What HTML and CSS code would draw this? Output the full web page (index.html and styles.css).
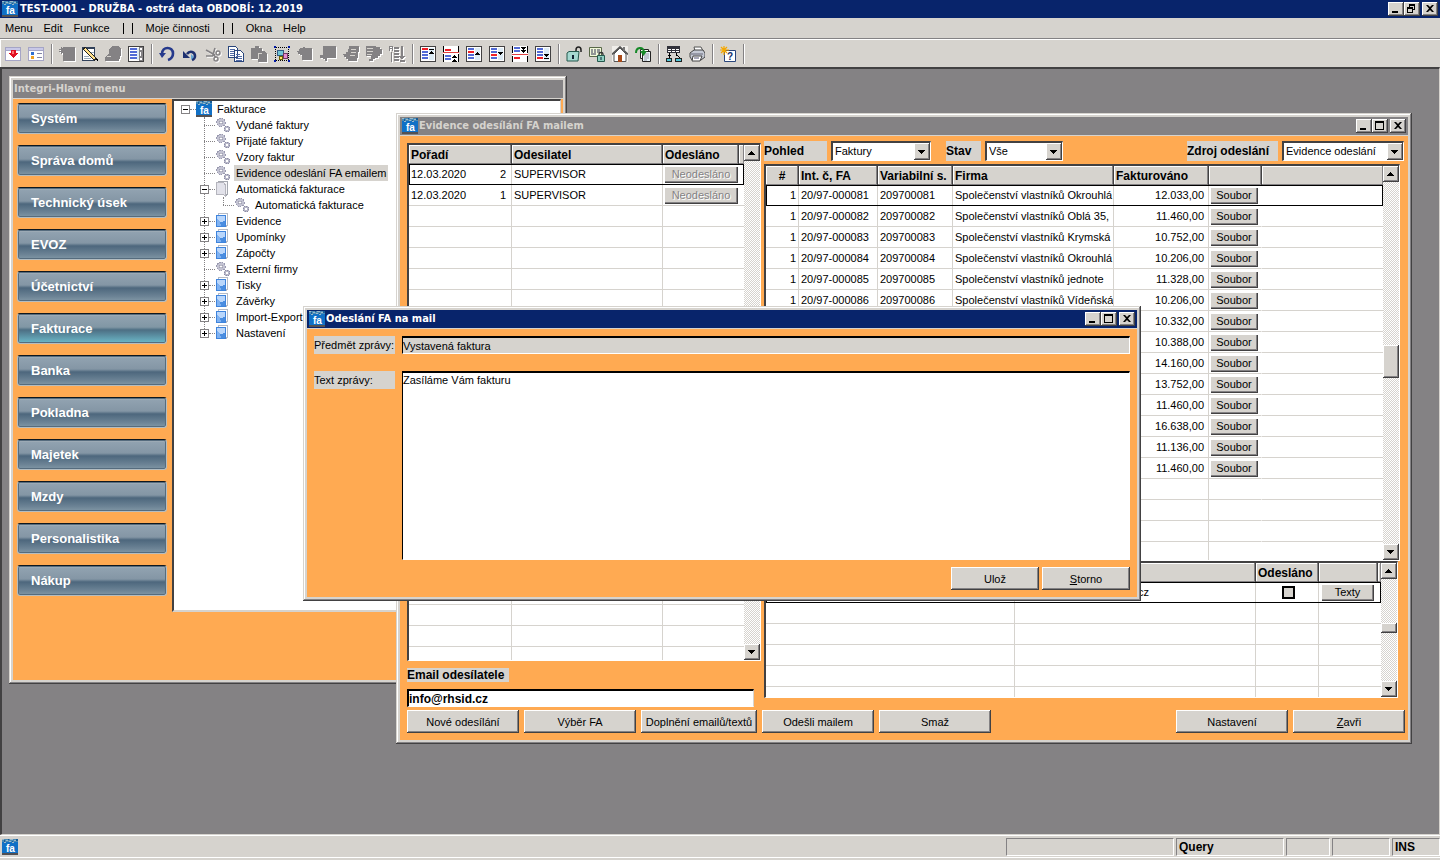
FILE: index.html
```html
<!DOCTYPE html>
<html lang="cs">
<head>
<meta charset="utf-8">
<title>TEST-0001 - DRUŽBA</title>
<link rel="stylesheet" href="styles.css">
</head>
<body>
<svg class="defs" aria-hidden="true">
  <symbol id="logo" viewBox="0 0 16 16">
    <rect width="16" height="16" fill="#1070c6"/><rect width="16" height="3" fill="#4a8ab5"/>
    <path d="M0 0h2v1H0zM4 1h2v1H4zM8 0h3v1H8zM7 2h2v1H7zM12 1h2v1h-2zM2 3h2v1H2zM10 3h2v1h-2z" fill="#9cb8c8"/>
    <path d="M2 1h1v2H2zM6 0h1v1H6zM10 2h1v1h-1zM14 0h2v2h-2z" fill="#165b96"/>
    <rect y="14" width="16" height="2" fill="#525052"/>
    <text x="4" y="13" class="logo-text">fa</text>
  </symbol>
  <symbol id="gear" viewBox="0 0 16 16">
    <circle cx="6" cy="5.500" r="4.200" fill="#c3c3d2" stroke="#9a9ab0" stroke-dasharray="1.500 1"/><circle cx="6" cy="5.500" r="1.600" fill="#fff" stroke="#8a8aa0" stroke-width=".6"/>
    <circle cx="12" cy="12" r="3" fill="#b7b7c8" stroke="#8c8ca4" stroke-dasharray="1.300 1"/><circle cx="12" cy="12" r="1.100" fill="#fff"/>
  </symbol>
  <symbol id="book" viewBox="0 0 16 16">
    <path d="M3.500.500h9v12l-2 1h-7z" fill="#fff" stroke="#b5bac5"/><path d="M1 2h10v12H1z" fill="#3f84dc"/><path d="M2 3h8v10H2z" fill="#7fb2f2"/><path d="M2 3h8v5L6 9 2 6z" fill="#b9d6fb"/><path d="M5 9l5-1v5H6z" fill="#4a8de0"/>
  </symbol>
  <symbol id="folder" viewBox="0 0 16 16">
    <path d="M3.500.500h9v12l-1 2-2-2h-6z" fill="#f5f5f8" stroke="#a5a8b0"/><path d="M1.500 1.500h7l2 2.500v11l-3-2h-6z" fill="#e2e2ea" stroke="#b5b5bd"/>
  </symbol>
  <symbol id="min" viewBox="0 0 12 10"><path d="M2 7h6v2H2z"/></symbol>
  <symbol id="max" viewBox="0 0 12 10"><path d="M1 0h9v9H1zM2 2v6h7V2z" fill-rule="evenodd"/></symbol>
  <symbol id="restore" viewBox="0 0 12 10"><path d="M3 0h6v6H7v3H1V3h2zM4 2v1h3v2h1V2zM2 5v3h4V5z" fill-rule="evenodd"/></symbol>
  <symbol id="close" viewBox="0 0 12 10"><path d="M2 1h2l2 2 2-2h2L7 4.500 10 8H8L6 6 4 8H2l3-3.500z" shape-rendering="auto"/></symbol>
  <symbol id="up" viewBox="0 0 8 8"><path d="M3 2h1v1h1v1h1v1h1v1H0V5h1V4h1V3h1z"/></symbol>
  <symbol id="down" viewBox="0 0 8 8"><path d="M0 2h7v1H6v1H5v1H4v1H3V5H2V4H1V3H0z"/></symbol>
  <symbol id="page" viewBox="0 0 16 16"><path d="M0 0h16v16H0z" fill="#424142"/><path d="M1 1h14v14H1z" fill="#fff"/><path d="M9 2h5v12H9z" fill="#dcebf5"/></symbol>
  <symbol id="win" viewBox="0 0 16 16"><path d="M0 1h16v14H0z" fill="#a5a5c6"/><path d="M1 2h14v2H1z" fill="#c8c8e8"/><path d="M1 5h14v9H1z" fill="#fff"/></symbol>
</svg>

<div class="app">
  <header class="titlebar">
    <svg class="i16"><use href="#logo"/></svg><h1>TEST-0001 - DRUŽBA - ostrá data OBDOBÍ: 12.2019</h1>
    <div class="ctl"><button type="button" aria-label="Minimalizovat"><svg><use href="#min"/></svg></button><button type="button" aria-label="Obnovit"><svg><use href="#restore"/></svg></button><button type="button" aria-label="Zavřít aplikaci"><svg><use href="#close"/></svg></button></div>
  </header>
  <nav class="menubar">
    <button type="button">Menu</button><button type="button">Edit</button><button type="button">Funkce</button><span class="bars"><i></i><i></i></span><button type="button">Moje činnosti</button><span class="bars"><i></i><i></i></span><button type="button">Okna</button><button type="button">Help</button>
  </nav>
  <div class="toolbar" role="toolbar" aria-label="Nástroje">
    <button type="button" aria-label="Konec"><svg><use href="#win"/><path d="M6 4h5v3h2v1h-1v1h-1v1h-1v1H9v1H8v-1H7v-1H6V9H5V8H4V7h2z" fill="#e01020"/><path d="M7 5h2v3H7z" fill="#ff7070"/></svg></button>
    <button type="button" aria-label="Formulář"><svg><use href="#win"/><path d="M3 6h3v3H3z" fill="#3070d0"/><path d="M3 10h3v3H3z" fill="#f0a020"/><path d="M9 7h5v1H9zM9 11h5v1H9z" fill="#8486a5"/></svg></button>
    <span class="sep"></span>
    <button type="button" aria-label="Nový"><svg class="dim"><path d="M4 1h12v14H4V7H3v1H2V6H0V5h2V4H0V3h2V1h1v1h1z"/></svg></button>
    <button type="button" aria-label="Upravit"><svg><path d="M0 1h13v14H0z" fill="#31415a"/><path d="M1 3h11v11H1z" fill="#fff"/><path d="M8 6h4M2 10h5M2 12h7" stroke="#9ab"/><path d="M2 2l12 12" stroke="#222" stroke-width="4"/><path d="M3 3l10 10" stroke="#ffe08a" stroke-width="2"/><path d="M13 13h3v3z"/></svg></button>
    <button type="button" aria-label="Smazat"><svg class="dim"><path d="M7 0h7l2 3v6l-2 6H0v-4l4-3V4z"/><path d="M2 10h4v1H2z" fill="#d6d3ce"/></svg></button>
    <button type="button" aria-label="Seznam"><svg><use href="#page"/><path d="M2 2h7v2H2zM2 5h7v2H2zM2 8h7v2H2zM2 11h7v2H2z" fill="#526bd6"/><path d="M11 1h4v14h-4z" fill="#848284"/><path d="M12 2h2v2h-2zM12 12h2v2h-2zM12 6h1v4h-1z" fill="#fff"/></svg></button>
    <span class="sep"></span>
    <button type="button" aria-label="Zpět"><svg class="soft"><path d="M3 8C3 0 14 0 14 7.500c0 3.500-2 5.500-5 6.500" fill="none" stroke="#263a8c" stroke-width="2.600"/><path d="M0 7h7l-4 5z" fill="#263a8c"/></svg></button>
    <button type="button" aria-label="Zpět o krok"><svg class="soft"><path d="M5 8c3-4 8-2 8 2 0 2-1 3-3 4" fill="none" stroke="#1d3070" stroke-width="2.600"/><path d="M1 5v7h7z" fill="#1d3070"/><path d="M9 8l3 3-3 3z" fill="#63a5d6"/></svg></button>
    <button type="button" aria-label="Vyjmout"><svg class="soft dim"><path d="M1 4l9 5M10 2L8 9l3 2M1 10h7" fill="none" stroke="#848284" stroke-width="1.600"/><circle cx="13" cy="7" r="2" fill="none" stroke="#848284" stroke-width="1.500"/><circle cx="11" cy="13" r="2" fill="none" stroke="#848284" stroke-width="1.500"/></svg></button>
    <button type="button" aria-label="Kopírovat"><svg><path d="M.500.500h7l2 2v9h-9zM6.500 4.500h6l3 3v8h-9z" fill="#fff" stroke="#29457b"/><path d="M2 3h5M2 5h4M2 7h4M2 9h4M8 8h4M8 10h6M8 12h6M8 14h6" transform="translate(0 .5)" stroke="#526ba5"/></svg></button>
    <button type="button" aria-label="Vložit"><svg class="dim"><path d="M0 2h4V0h4v2h3v3h2l3 3v8H7v-3H0z"/><path d="M7 7h4v1H8v5H7z" fill="#d6d3ce"/></svg></button>
    <button type="button" aria-label="Vybrat"><svg><path d="M1.500 1.500h13v13h-13z" fill="none" stroke="#000" stroke-dasharray="1 1"/><path d="M3.500 4.500h6v5h-6z" fill="#73c6d6" stroke="#315a84"/><path d="M9.500 7.500h4v5h-4z" fill="#e78cce" stroke="#733a63"/><path d="M5.500 10.500h3v3h-3z" fill="#ffe76b" stroke="#6b6300"/><path d="M0 0h2v2H0zM14 0h2v2h-2zM0 14h2v2H0zM14 14h2v2h-2z" fill="#0018a5"/></svg></button>
    <button type="button" aria-label="Vložit řádek"><svg class="dim"><path d="M3 2h3V1h2v1h7v12H5V9H3V8H1V6H0V5h2V3h1z"/></svg></button>
    <button type="button" aria-label="Odebrat řádek"><svg class="dim"><path d="M3 0h13v12H7v3H5v-2H3v-1H0V9h3z"/></svg></button>
    <button type="button" aria-label="Předchozí"><svg class="dim"><path d="M6 0h10v6h-1v6h-1v3H5v-2H3v-2H1V9H0V8h3V6h2z"/><path d="M8 3h5v1H8zM8 6h5v1H8zM7 9h5v1H7z" fill="#d6d3ce"/></svg></button>
    <button type="button" aria-label="Další"><svg class="dim"><path d="M0 0h10v1h4v2h2v5h-2v2h-2v2H9v1H7v2H3v-2h2v-3H0z"/><path d="M1 2h6v1H1zM1 5h6v1H1zM1 8h5v1H1z" fill="#d6d3ce"/></svg></button>
    <button type="button" aria-label="Řadit"><svg class="dim"><path d="M0 0h4v1H0zM0 2h4v1H0zM0 0h1v5H0zM3 0h1v5H3zM5 1h5v2H5zM5 4h5v2H5zM5 7h5v2H5zM5 10h5v2H5zM5 13h5v2H5zM12 0h2v10h2v1h-1v1h-1v1h-2v-1h-1v-1h-1v-1h2zM2 6h1v10H2zM11 14h5v2h-5z"/></svg></button>
    <span class="sep"></span>
    <button type="button" aria-label="První záznam"><svg><use href="#page"/><path d="M2 2h6v2H2z" fill="#f02028"/><path d="M2 5h6v2H2zM2 8h6v2H2zM2 11h6v2H2z" fill="#526bd6"/><path d="M9 3h5v1H9zM11 5h1v1h1v1h1v1H9V7h1V6h1z"/></svg></button>
    <button type="button" aria-label="Předchozí strana"><svg><path d="M0 0h16v16H0z" fill="#fff"/><path d="M2 3h6v2H2z" fill="#f02028"/><path d="M0 6h16v1H0z" fill="#e04040"/><path d="M2 9h6v2H2zM2 12h6v2H2z" fill="#526bd6"/><path d="M0 0h1v6H0zM15 0h1v6h-1zM0 8h1v8H0zM15 8h1v8h-1zM11 9h1v1h1v1h1v1H9v-1h1v-1h1zM11 13h1v1h1v1h1v1H9v-1h1v-1h1z"/></svg></button>
    <button type="button" aria-label="Předchozí záznam"><svg><use href="#page"/><path d="M2 5h6v2H2z" fill="#f02028"/><path d="M2 2h6v2H2zM2 8h6v2H2zM2 11h6v2H2z" fill="#526bd6"/><path d="M11 6h1v1h1v1h1v1H9V8h1V7h1z"/></svg></button>
    <button type="button" aria-label="Další záznam"><svg><use href="#page"/><path d="M2 8h6v2H2z" fill="#f02028"/><path d="M2 2h6v2H2zM2 5h6v2H2zM2 11h6v2H2z" fill="#526bd6"/><path d="M9 6h5v1h-1v1h-1v1h-1V8h-1V7H9z"/></svg></button>
    <button type="button" aria-label="Další strana"><svg><path d="M0 0h16v16H0z" fill="#fff"/><path d="M2 1h6v2H2zM2 4h6v2H2z" fill="#526bd6"/><path d="M0 8h16v1H0z" fill="#e04040"/><path d="M2 11h6v2H2z" fill="#f02028"/><path d="M0 0h1v7H0zM15 0h1v7h-1zM0 10h1v6H0zM15 10h1v6h-1zM9 1h5v1h-1v1h-1v1h-1V3h-1V2H9zM9 4h5v1h-1v1h-1v1h-1V6h-1V5H9z"/></svg></button>
    <button type="button" aria-label="Poslední záznam"><svg><use href="#page"/><path d="M2 11h6v2H2z" fill="#f02028"/><path d="M2 2h6v2H2zM2 5h6v2H2zM2 8h6v2H2z" fill="#526bd6"/><path d="M9 8h5v1h-1v1h-1v1h-1v-1h-1V9H9zM9 12h5v1H9z"/></svg></button>
    <span class="sep"></span>
    <button type="button" aria-label="Odemknout"><svg class="soft"><path d="M10 7V4c0-4 5-4 5 0v2" fill="none" stroke="#222" stroke-width="1.500"/><path d="M1 7l2-1.500h10L12 15H1z" fill="#a5d8d0" stroke="#24584c"/><path d="M6 9h2v4H6z" fill="#123"/></svg></button>
    <button type="button" aria-label="Zamknout záznam"><svg class="soft"><path d="M.500 1.500h12v9H.500z" fill="#f0f8d8" stroke="#586848"/><path d="M2 4h2M5 4h2M8 4h3M2 6h2M5 6h2M8 6h3M2 8h5" stroke="#335"/><path d="M10 10V8c0-2 4-2 4 0v2" fill="none" stroke="#333" stroke-width="1.300"/><path d="M8.500 9.500h7v6h-7z" fill="#8fcfc0" stroke="#24584c"/><path d="M11.500 11h1v3h-1z" fill="#123"/></svg></button>
    <button type="button" aria-label="Domů"><svg class="soft"><path d="M0 0h16v16H0z" fill="#f0eeea"/><path d="M2 8v7.500h12V8L8 2z" fill="#fff" stroke="#555"/><path d="M0 8.500L8 1l8 7.500" fill="none" stroke="#555" stroke-width="1.700"/><path d="M11 1h2v4h-2z" fill="#777"/><path d="M6 9h4v7H6z" fill="#a84a18"/></svg></button>
    <button type="button" aria-label="Obnovit data"><svg class="soft"><path d="M5.500 3.500h8v9h-8z" fill="#fff" stroke="#222"/><path d="M7.500 5.500h8v10h-8z" fill="#e8f4f8" stroke="#222"/><path d="M9 8h5M9 10h5M9 12h5M9 14h3" stroke="#99a"/><path d="M1 7c0-6 7-7 8-1" fill="none" stroke="#168a28" stroke-width="2"/><path d="M5 5h7L8.500 10z" fill="#168a28"/></svg></button>
    <span class="sep"></span>
    <button type="button" aria-label="Struktura"><svg><path d="M1 0h13v7H1z" fill="#31313a"/><path d="M2 3h3v1H2zM6 3h3v1H6zM10 3h3v1h-3zM2 5h3v1H2zM6 5h3v1H6zM10 5h3v1h-3z" fill="#fff"/><path d="M3 7h1v6H3zM2 9h3v1H2zM11 9h1v1h1v1h1v2h-1v-2h-1v-1h-2V7h1z"/><path d="M0 12h6v4H0zM9 12h7v4H9z" fill="#222"/><path d="M1 13h4v2H1zM10 13h5v2h-5z" fill="#52c6d6"/></svg></button>
    <button type="button" aria-label="Tisk"><svg class="soft"><path d="M5 1h7l2 4H6z" fill="#fff" stroke="#555"/><path d="M1 7l4-3h9l2 3v4l-4 3H3l-2-3z" fill="#c5cad5" stroke="#444"/><path d="M2 8h12" stroke="#667"/><path d="M4 10h9l-2 5H3z" fill="#fff" stroke="#444"/><path d="M5 12h5" stroke="#557"/></svg></button>
    <span class="sep"></span>
    <button type="button" aria-label="Nápověda"><svg class="soft"><path d="M4.500 4.500h11v11h-11z" fill="#fff" stroke="#29457b"/><text x="7" y="14" class="q">?</text><path d="M4 0v9M0 4h9M1 1l6 6M7 1L1 7" stroke="#f5a800" stroke-width="1.200"/></svg></button>
    <span class="sep"></span>
  </div>

  <main class="workspace">
    <section class="window w-menu">
      <header class="titlebar idle"><h2>Integri-Hlavní menu</h2></header>
      <div class="body menu-body">
        <nav class="modules">
          <button type="button">Systém</button><button type="button">Správa domů</button><button type="button">Technický úsek</button><button type="button">EVOZ</button><button type="button">Účetnictví</button><button type="button" class="active">Fakturace</button><button type="button">Banka</button><button type="button">Pokladna</button><button type="button">Majetek</button><button type="button">Mzdy</button><button type="button">Personalistika</button><button type="button">Nákup</button>
        </nav>
        <div class="tree">
          <div class="node"><i class="box"></i><i class="dots"></i><svg class="i16"><use href="#logo"/></svg><span>Fakturace</span></div>
          <ul>
            <li><div class="node leaf"><i class="dots"></i><svg class="i16"><use href="#gear"/></svg><span>Vydané faktury</span></div></li>
            <li><div class="node leaf"><i class="dots"></i><svg class="i16"><use href="#gear"/></svg><span>Přijaté faktury</span></div></li>
            <li><div class="node leaf"><i class="dots"></i><svg class="i16"><use href="#gear"/></svg><span>Vzory faktur</span></div></li>
            <li><div class="node leaf"><i class="dots"></i><svg class="i16"><use href="#gear"/></svg><span class="chosen">Evidence odeslání FA emailem</span></div></li>
            <li><div class="node"><i class="box"></i><i class="dots"></i><svg class="i16"><use href="#folder"/></svg><span>Automatická fakturace</span></div>
              <ul><li><div class="node leaf"><i class="dots"></i><svg class="i16"><use href="#gear"/></svg><span>Automatická fakturace</span></div></li></ul></li>
            <li><div class="node"><i class="box plus"></i><i class="dots"></i><svg class="i16"><use href="#book"/></svg><span>Evidence</span></div></li>
            <li><div class="node"><i class="box plus"></i><i class="dots"></i><svg class="i16"><use href="#book"/></svg><span>Upomínky</span></div></li>
            <li><div class="node"><i class="box plus"></i><i class="dots"></i><svg class="i16"><use href="#book"/></svg><span>Zápočty</span></div></li>
            <li><div class="node leaf"><i class="dots"></i><svg class="i16"><use href="#gear"/></svg><span>Externí firmy</span></div></li>
            <li><div class="node"><i class="box plus"></i><i class="dots"></i><svg class="i16"><use href="#book"/></svg><span>Tisky</span></div></li>
            <li><div class="node"><i class="box plus"></i><i class="dots"></i><svg class="i16"><use href="#book"/></svg><span>Závěrky</span></div></li>
            <li><div class="node"><i class="box plus"></i><i class="dots"></i><svg class="i16"><use href="#book"/></svg><span>Import-Export</span></div></li>
            <li><div class="node"><i class="box plus"></i><i class="dots"></i><svg class="i16"><use href="#book"/></svg><span>Nastavení</span></div></li>
          </ul>
        </div>
      </div>
    </section>

    <section class="window w-mail">
      <header class="titlebar idle"><svg class="i16"><use href="#logo"/></svg><h2>Evidence odesílání FA mailem</h2>
        <div class="ctl"><button type="button" aria-label="Minimalizovat okno"><svg><use href="#min"/></svg></button><button type="button" aria-label="Maximalizovat okno"><svg><use href="#max"/></svg></button><button type="button" aria-label="Zavřít okno"><svg><use href="#close"/></svg></button></div></header>
      <div class="body mail-body">
        <div class="panes">
          <div class="pane-left">
            <div class="grid grow">
              <div class="view"><table>
                <colgroup><col class="c103"><col class="c151"><col class="c76"><col></colgroup>
                <thead><tr><th>Pořadí</th><th>Odesilatel</th><th>Odesláno</th><th class="rest"></th></tr></thead>
                <tbody>
                  <tr class="sel"><td><div class="pair"><span>12.03.2020</span><span>2</span></div></td><td>SUPERVISOR</td><td colspan="2" class="bt"><button type="button" class="cell-btn wide" disabled>Neodesláno</button></td></tr>
                  <tr><td><div class="pair"><span>12.03.2020</span><span>1</span></div></td><td>SUPERVISOR</td><td colspan="2" class="bt"><button type="button" class="cell-btn wide" disabled>Neodesláno</button></td></tr>
                  <tr><td><td><td colspan="2"></tr><tr><td><td><td colspan="2"></tr><tr><td><td><td colspan="2"></tr><tr><td><td><td colspan="2"></tr>
                  <tr><td><td><td colspan="2"></tr><tr><td><td><td colspan="2"></tr><tr><td><td><td colspan="2"></tr><tr><td><td><td colspan="2"></tr>
                  <tr><td><td><td colspan="2"></tr><tr><td><td><td colspan="2"></tr><tr><td><td><td colspan="2"></tr><tr><td><td><td colspan="2"></tr>
                  <tr><td><td><td colspan="2"></tr><tr><td><td><td colspan="2"></tr><tr><td><td><td colspan="2"></tr><tr><td><td><td colspan="2"></tr>
                  <tr><td><td><td colspan="2"></tr><tr><td><td><td colspan="2"></tr><tr><td><td><td colspan="2"></tr><tr><td><td><td colspan="2"></tr>
                  <tr><td><td><td colspan="2"></tr><tr><td><td><td colspan="2"></tr>
                </tbody>
              </table></div>
              <div class="scroll"><button type="button" aria-label="Nahoru"><svg><use href="#up"/></svg></button><button type="button" aria-label="Dolů"><svg><use href="#down"/></svg></button></div>
            </div>
            <label class="tag email-tag" for="email">Email odesílatele</label>
            <input class="email" id="email" value="info@rhsid.cz">
          </div>
          <div class="pane-right">
            <div class="filters">
              <label class="tag t1" for="f1">Pohled</label><div class="combo s1"><select id="f1"><option>Faktury</option></select><i><svg><use href="#down"/></svg></i></div>
              <label class="tag t2" for="f2">Stav</label><div class="combo s2"><select id="f2"><option>Vše</option></select><i><svg><use href="#down"/></svg></i></div>
              <label class="tag t3" for="f3">Zdroj odeslání</label><div class="combo s3"><select id="f3"><option>Evidence odeslání</option></select><i><svg><use href="#down"/></svg></i></div>
            </div>
            <div class="grid invoices">
              <div class="view"><table class="inv">
                <colgroup><col class="c33"><col class="c79"><col class="c75"><col class="c161"><col class="c95"><col class="c53"><col></colgroup>
                <thead><tr><th class="mid">#</th><th>Int. č, FA</th><th>Variabilní s.</th><th>Firma</th><th>Fakturováno</th><th></th><th class="rest"></th></tr></thead>
                <tbody>
                  <tr class="sel"><td>1</td><td>20/97-000081</td><td>209700081</td><td>Společenství vlastníků Okrouhlá</td><td>12.033,00</td><td class="bt"><button type="button" class="cell-btn">Soubor</button></td><td></td></tr>
                  <tr><td>1</td><td>20/97-000082</td><td>209700082</td><td>Společenství vlastníků Oblá 35,</td><td>11.460,00</td><td class="bt"><button type="button" class="cell-btn">Soubor</button></td><td></td></tr>
                  <tr><td>1</td><td>20/97-000083</td><td>209700083</td><td>Společenství vlastníků Krymská</td><td>10.752,00</td><td class="bt"><button type="button" class="cell-btn">Soubor</button></td><td></td></tr>
                  <tr><td>1</td><td>20/97-000084</td><td>209700084</td><td>Společenství vlastníků Okrouhlá</td><td>10.206,00</td><td class="bt"><button type="button" class="cell-btn">Soubor</button></td><td></td></tr>
                  <tr><td>1</td><td>20/97-000085</td><td>209700085</td><td>Společenství vlastníků jednote</td><td>11.328,00</td><td class="bt"><button type="button" class="cell-btn">Soubor</button></td><td></td></tr>
                  <tr><td>1</td><td>20/97-000086</td><td>209700086</td><td>Společenství vlastníků Vídeňská</td><td>10.206,00</td><td class="bt"><button type="button" class="cell-btn">Soubor</button></td><td></td></tr>
                  <tr><td><td><td><td><td>10.332,00</td><td class="bt"><button type="button" class="cell-btn">Soubor</button></td><td></td></tr>
                  <tr><td><td><td><td><td>10.388,00</td><td class="bt"><button type="button" class="cell-btn">Soubor</button></td><td></td></tr>
                  <tr><td><td><td><td><td>14.160,00</td><td class="bt"><button type="button" class="cell-btn">Soubor</button></td><td></td></tr>
                  <tr><td><td><td><td><td>13.752,00</td><td class="bt"><button type="button" class="cell-btn">Soubor</button></td><td></td></tr>
                  <tr><td><td><td><td><td>11.460,00</td><td class="bt"><button type="button" class="cell-btn">Soubor</button></td><td></td></tr>
                  <tr><td><td><td><td><td>16.638,00</td><td class="bt"><button type="button" class="cell-btn">Soubor</button></td><td></td></tr>
                  <tr><td><td><td><td><td>11.136,00</td><td class="bt"><button type="button" class="cell-btn">Soubor</button></td><td></td></tr>
                  <tr><td><td><td><td><td>11.460,00</td><td class="bt"><button type="button" class="cell-btn">Soubor</button></td><td></td></tr>
                  <tr><td><td><td><td><td><td class="bt"><td></tr><tr><td><td><td><td><td><td class="bt"><td></tr>
                  <tr><td><td><td><td><td><td class="bt"><td></tr><tr><td><td><td><td><td><td class="bt"><td></tr>
                </tbody>
              </table></div>
              <div class="scroll"><button type="button" aria-label="Nahoru"><svg><use href="#up"/></svg></button><span class="gap a"></span><span class="thumb"></span><span class="gap b"></span><button type="button" aria-label="Dolů"><svg><use href="#down"/></svg></button></div>
            </div>
            <div class="grid recipients">
              <div class="view"><table>
                <colgroup><col class="c249"><col class="c241"><col class="c63"><col class="c59"><col></colgroup>
                <thead><tr><th></th><th></th><th>Odesláno</th><th></th><th class="rest"></th></tr></thead>
                <tbody>
                  <tr class="sel"><td></td><td class="tail">cz</td><td class="mid"><input type="checkbox" aria-label="Odesláno"></td><td colspan="2" class="bt"><button type="button" class="cell-btn texts">Texty</button></td></tr>
                  <tr><td><td><td><td colspan="2"></tr><tr><td><td><td><td colspan="2"></tr><tr><td><td><td><td colspan="2"></tr><tr><td><td><td><td colspan="2"></tr><tr><td><td><td><td colspan="2"></tr>
                </tbody>
              </table></div>
              <div class="scroll"><button type="button" aria-label="Nahoru"><svg><use href="#up"/></svg></button><span class="gap c"></span><span class="thumb small"></span><span class="gap b"></span><button type="button" aria-label="Dolů"><svg><use href="#down"/></svg></button></div>
            </div>
          </div>
        </div>
        <footer class="actions">
          <button type="button" class="btn">Nové odesílání</button><button type="button" class="btn">Výběr FA</button><button type="button" class="btn">Doplnění emailů/textů</button><button type="button" class="btn">Odešli mailem</button><button type="button" class="btn">Smaž</button><button type="button" class="btn end">Nastavení</button><button type="button" class="btn"><u>Z</u>avři</button>
        </footer>
      </div>
    </section>

    <section class="window w-dialog" role="dialog" aria-label="Odeslání FA na mail">
      <header class="titlebar"><svg class="i16"><use href="#logo"/></svg><h2>Odeslání FA na mail</h2>
        <div class="ctl"><button type="button" aria-label="Minimalizovat dialog"><svg><use href="#min"/></svg></button><button type="button" aria-label="Maximalizovat dialog"><svg><use href="#max"/></svg></button><button type="button" aria-label="Zavřít dialog"><svg><use href="#close"/></svg></button></div></header>
      <form class="body dialog-body">
        <label for="subj">Předmět zprávy:</label><input id="subj" value="Vystavená faktura">
        <label for="msg">Text zprávy:</label><textarea id="msg">Zasíláme Vám fakturu</textarea>
        <div class="dialog-actions"><button type="button" class="btn">Ulož</button><button type="button" class="btn"><u>S</u>torno</button></div>
      </form>
    </section>
  </main>

  <footer class="status"><svg class="i16"><use href="#logo"/></svg><span class="p1"></span><span class="p2">Query</span><span class="p3"></span><span class="p4"></span><span class="p5">INS</span></footer>
</div>
</body>
</html>
```
FILE: styles.css
```css
:root {
  --face: #d6d3ce;
  --shade: #848284;
  --dark: #424142;
  --navy: #08246b;
  --orange: #ffaa52;
}
* { box-sizing: border-box; }
body, button, input, select, textarea { font: 11px/14px "Liberation Sans", Arial, sans-serif; color: #000; }
body { margin: 0; background: var(--face); }
h1, h2, ul { margin: 0; padding: 0; }
ul { list-style: none; }
button { padding: 0; white-space: nowrap; }
svg { display: block; shape-rendering: crispEdges; }
.defs { position: absolute; width: 0; height: 0; }
.soft { shape-rendering: auto; }
.i16 { width: 16px; height: 16px; flex: none; }
.logo-text { font: bold 10px "Liberation Sans", sans-serif; fill: #fff; }
.q { font: bold 10px "Liberation Sans", sans-serif; fill: #10306b; }

.app { display: flex; flex-direction: column; height: 100vh; min-height: 860px; overflow: hidden; }

.titlebar { display: flex; align-items: center; gap: 2px; height: 18px; padding: 0 2px; background: var(--navy); color: #fff; flex: none; }
.titlebar h1, .titlebar h2 { flex: 1; font: bold 11px/16px "DejaVu Sans Condensed", "DejaVu Sans", sans-serif; white-space: nowrap; }
.titlebar.idle { background: var(--shade); color: var(--face); }
.ctl { display: flex; }
.ctl button { width: 16px; height: 14px; border: 0; background: var(--face); display: grid; place-items: center;
  box-shadow: inset -1px -1px var(--dark), inset 1px 1px #fff, inset -2px -2px var(--shade); }
.ctl button:last-child { margin-left: 2px; }
.ctl svg { width: 12px; height: 10px; }

.menubar { display: flex; align-items: center; gap: 11px; height: 20px; padding: 0 5px; flex: none; }
.menubar button { border: 0; background: none; }
.bars { display: flex; gap: 8px; padding: 0 2px; }
.bars i { width: 1px; height: 11px; background: #000; }

.toolbar { display: flex; align-items: center; gap: 7px; height: 29px; padding: 1px 5px 0; border-top: 1px solid var(--shade); box-shadow: inset 1px 1px #fff; flex: none; }
.toolbar button { border: 0; background: none; }
.toolbar svg { width: 16px; height: 16px; }
.toolbar .dim { fill: var(--shade); filter: drop-shadow(1px 1px 0 #fff); }
.sep { width: 1px; height: 20px; background: var(--shade); box-shadow: 1px 0 #fff; }

.workspace { position: relative; flex: 1; background: var(--shade); border: 2px solid var(--dark); border-width: 2px 1px 1px 2px; border-right-color: var(--face); border-bottom-color: var(--face); }

.window { position: absolute; display: flex; flex-direction: column; padding: 4px; background: var(--face);
  box-shadow: inset -1px -1px var(--dark), inset 1px 1px var(--face), inset -2px -2px var(--shade), inset 2px 2px #fff; }
.w-menu { left: 7px; top: 7px; width: 558px; height: 608px; }
.w-menu .titlebar { padding-left: 1px; }
.w-mail { left: 394px; top: 44px; width: 1016px; height: 631px; }
.w-dialog { left: 301px; top: 237px; width: 838px; height: 295px; }
.w-mail .titlebar, .w-dialog .titlebar { gap: 1px; }
.body { flex: 1; min-height: 0; margin-top: 1px; background: var(--orange); }

.menu-body { display: flex; align-items: flex-start; gap: 5px; padding: 0 2px 0 4px; }
.modules { display: flex; flex-direction: column; gap: 11px; width: 150px; padding-top: 4px; }
.modules button { height: 31px; padding: 0 13px; text-align: left; font-size: 13px; line-height: 16px; font-weight: bold; color: #fff;
  border: 1px solid #b5bdc0; border-top-color: #10181f; border-radius: 3px;
  background: linear-gradient(#93a4b2 0, #8496a5 45%, #4d677d 55%, #6d8496 85%, #8197a5 100%);
  box-shadow: inset 0 0 0 1px #566c7e, inset 0 2px #9caab5; }
.modules .active { background: linear-gradient(#93a4b2 0, #8197a5 45%, #4d6f84 55%, #6cb9c9 100%); }

.tree { flex: 1; height: 513px; padding: 0 7px; background: #fff; border: 2px solid var(--dark); border-right: 1px solid var(--face); border-bottom-color: var(--face); }
.node { display: flex; align-items: center; height: 16px; }
.node span { padding: 1px 2px; margin-left: 3px; white-space: nowrap; }
.node > .chosen { background: var(--face); }
.tree ul { position: relative; padding-left: 19px; }
.tree ul::before { content: ""; position: absolute; left: 23px; top: 0; bottom: 8px; border-left: 1px dotted var(--shade); }
.box { position: relative; flex: none; width: 9px; height: 9px; border: 1px solid var(--shade);
  background: linear-gradient(#000, #000) center / 5px 1px no-repeat, #fff; }
.box.plus { background: linear-gradient(#000, #000) center / 5px 1px no-repeat, linear-gradient(#000, #000) center / 1px 5px no-repeat, #fff; }
.dots { width: 6px; border-top: 1px dotted var(--shade); }
.leaf .dots { width: 11px; margin-left: 4px; }

.mail-body { display: flex; flex-direction: column; gap: 3px; padding: 5px 3px 7px 7px; }
.panes { display: flex; gap: 3px; flex: 1; min-height: 0; }
.pane-left { display: flex; flex-direction: column; width: 354px; padding-top: 2px; }
.pane-right { display: flex; flex-direction: column; flex: 1; min-width: 0; padding-right: 1px; }
.tag { background: var(--face); font-weight: bold; font-size: 12px; white-space: nowrap; }
.email-tag { align-self: flex-start; width: 102px; margin: 7px 0; }
.email { width: 347px; height: 18px; padding: 0; font-weight: bold; font-size: 12px; background: #fff; border: 2px solid #000; border-color: #000 var(--face) #fff #000; border-right-width: 1px; border-bottom-width: 1px; }

.filters { display: flex; height: 20px; margin-bottom: 3px; flex: none; }
.filters .tag { line-height: 20px; margin-right: 4px; }
.t1 { width: 63px; }
.t2 { width: 35px; margin-left: 15px; }
.t3 { width: 91px; margin-left: auto; }
.combo { display: flex; background: #fff; border: 2px solid var(--dark); border-right: 1px solid #fff; border-bottom: 1px solid #fff; }
.combo select { flex: 1; min-width: 0; appearance: none; border: 0; padding: 0 2px 2px; background: #fff; }
.combo i { width: 16px; background: var(--face); display: grid; place-items: center; box-shadow: inset -1px -1px var(--dark), inset 1px 1px #fff, inset -2px -2px var(--shade); }
.combo svg, .scroll svg { width: 8px; height: 8px; }
.s1 { width: 100px; }
.s2 { width: 78px; }
.s3 { width: 122px; }

.grid { display: flex; background: #fff; border: 2px solid var(--dark); border-color: var(--dark) #fff #fff var(--dark); border-right-width: 1px; border-bottom-width: 1px; }
.grow { flex: 1; min-height: 0; }
.invoices { flex: 1; min-height: 0; margin-right: 4px; }
.recipients { height: 137px; margin: 0 6px 9px 0; flex: none; }
.view { flex: 1; min-width: 0; overflow: hidden; }
table { width: 100%; table-layout: fixed; border-collapse: separate; border-spacing: 0; }
.c33 { width: 33px; }
.c53 { width: 53px; }
.c59 { width: 59px; }
.c63 { width: 63px; }
.c75 { width: 75px; }
.c76 { width: 76px; }
.c79 { width: 79px; }
.c95 { width: 95px; }
.c103 { width: 103px; }
.c151 { width: 151px; }
.c161 { width: 161px; }
.c241 { width: 241px; }
.c249 { width: 249px; }
th { height: 19px; padding: 0 2px; text-align: left; font-size: 12px; line-height: 14px; white-space: nowrap; overflow: hidden; background: var(--face);
  border-right: 1px solid var(--dark); box-shadow: inset -1px -1px var(--shade), inset 1px 1px #fff; }
th.rest { padding: 0; border-right: 0; }
td { height: 21px; padding: 0 0 0 2px; white-space: nowrap; overflow: hidden; border-right: 1px solid var(--face); border-bottom: 1px solid var(--face); }
td:last-child { border-right: 0; }
.sel { outline: 1px solid #000; outline-offset: -1px; }
.inv td:nth-child(1) { text-align: right; padding-right: 2px; }
.inv td:nth-child(5) { text-align: right; padding-right: 4px; }
.inv td.bt { border-right-color: #fff; }
td.mid, th.mid { text-align: center; }
td.tail { padding-left: 123px; }
.pair { display: flex; justify-content: space-between; padding-right: 5px; }
td.bt { padding: 0 1px; }
.cell-btn { display: block; width: 48px; height: 17px; border: 0; background: var(--face); box-shadow: inset 1px 1px #fff, inset -1px -1px var(--dark), inset -2px -2px var(--shade); }
.cell-btn.wide { width: 74px; }
.cell-btn.texts { width: 53px; margin-left: 1px; }
.cell-btn:disabled { color: var(--shade); text-shadow: 1px 1px #fff; }
input[type="checkbox"] { appearance: none; display: block; width: 13px; height: 13px; margin: 0 auto; border: 2px solid #000; background: var(--face); }

.scroll { display: flex; flex-direction: column; justify-content: space-between; width: 16px; background: repeating-conic-gradient(#fff 0 25%, var(--face) 0 50%) 0 0 / 2px 2px; }
.scroll button, .thumb { flex: none; height: 16px; border: 0; background: var(--face); display: grid; place-items: center; box-shadow: inset -1px -1px var(--dark), inset 1px 1px #fff, inset -2px -2px var(--shade); }
.scroll .thumb { height: 33px; }
.scroll .thumb.small { height: 10px; }
.gap.a { flex: 162; }
.gap.b { flex: 166; }
.gap.c { flex: 152; }

.btn { height: 23px; border: 0; background: var(--face); box-shadow: inset -1px -1px var(--dark), inset 1px 1px #fff, inset -2px -2px var(--shade); }
.actions { display: flex; gap: 5px; flex: none; }
.actions .btn { width: 112px; }
.actions .btn:nth-child(3) { width: 116px; }
.actions .end { margin-left: auto; }

.dialog-body { display: grid; grid-template-columns: 81px 1fr; grid-template-rows: 18px 1fr 23px; column-gap: 7px; padding: 7px; }
.dialog-body label { height: 18px; line-height: 18px; background: var(--face); white-space: nowrap; }
.dialog-body input, .dialog-body textarea { padding: 0; border: 1px solid #fff; border-top: 2px solid #000; border-left: 1px solid #000; }
.dialog-body input { height: 18px; background: var(--face); }
.dialog-body textarea { resize: none; margin-bottom: 7px; background: #fff; }
.dialog-body textarea, .dialog-body label[for="msg"] { margin-top: 17px; }
.dialog-actions { grid-column: 2; display: flex; justify-content: flex-end; gap: 3px; }
.dialog-actions .btn { width: 88px; }

.status { display: flex; align-items: center; gap: 2px; height: 25px; padding: 0 0 2px 2px; border-top: 1px solid #fff; box-shadow: inset 0 -2px var(--face), inset 0 -3px #fff; font-weight: bold; font-size: 12px; line-height: 16px; flex: none; }
.status span { height: 18px; padding-left: 2px; border: 1px solid var(--shade); border-right-color: #fff; border-bottom-color: #fff; }
.status .p1 { width: 168px; margin-left: auto; }
.p2 { width: 108px; }
.p3 { width: 44px; }
.p4 { width: 58px; }
.p5 { width: 48px; }
```
